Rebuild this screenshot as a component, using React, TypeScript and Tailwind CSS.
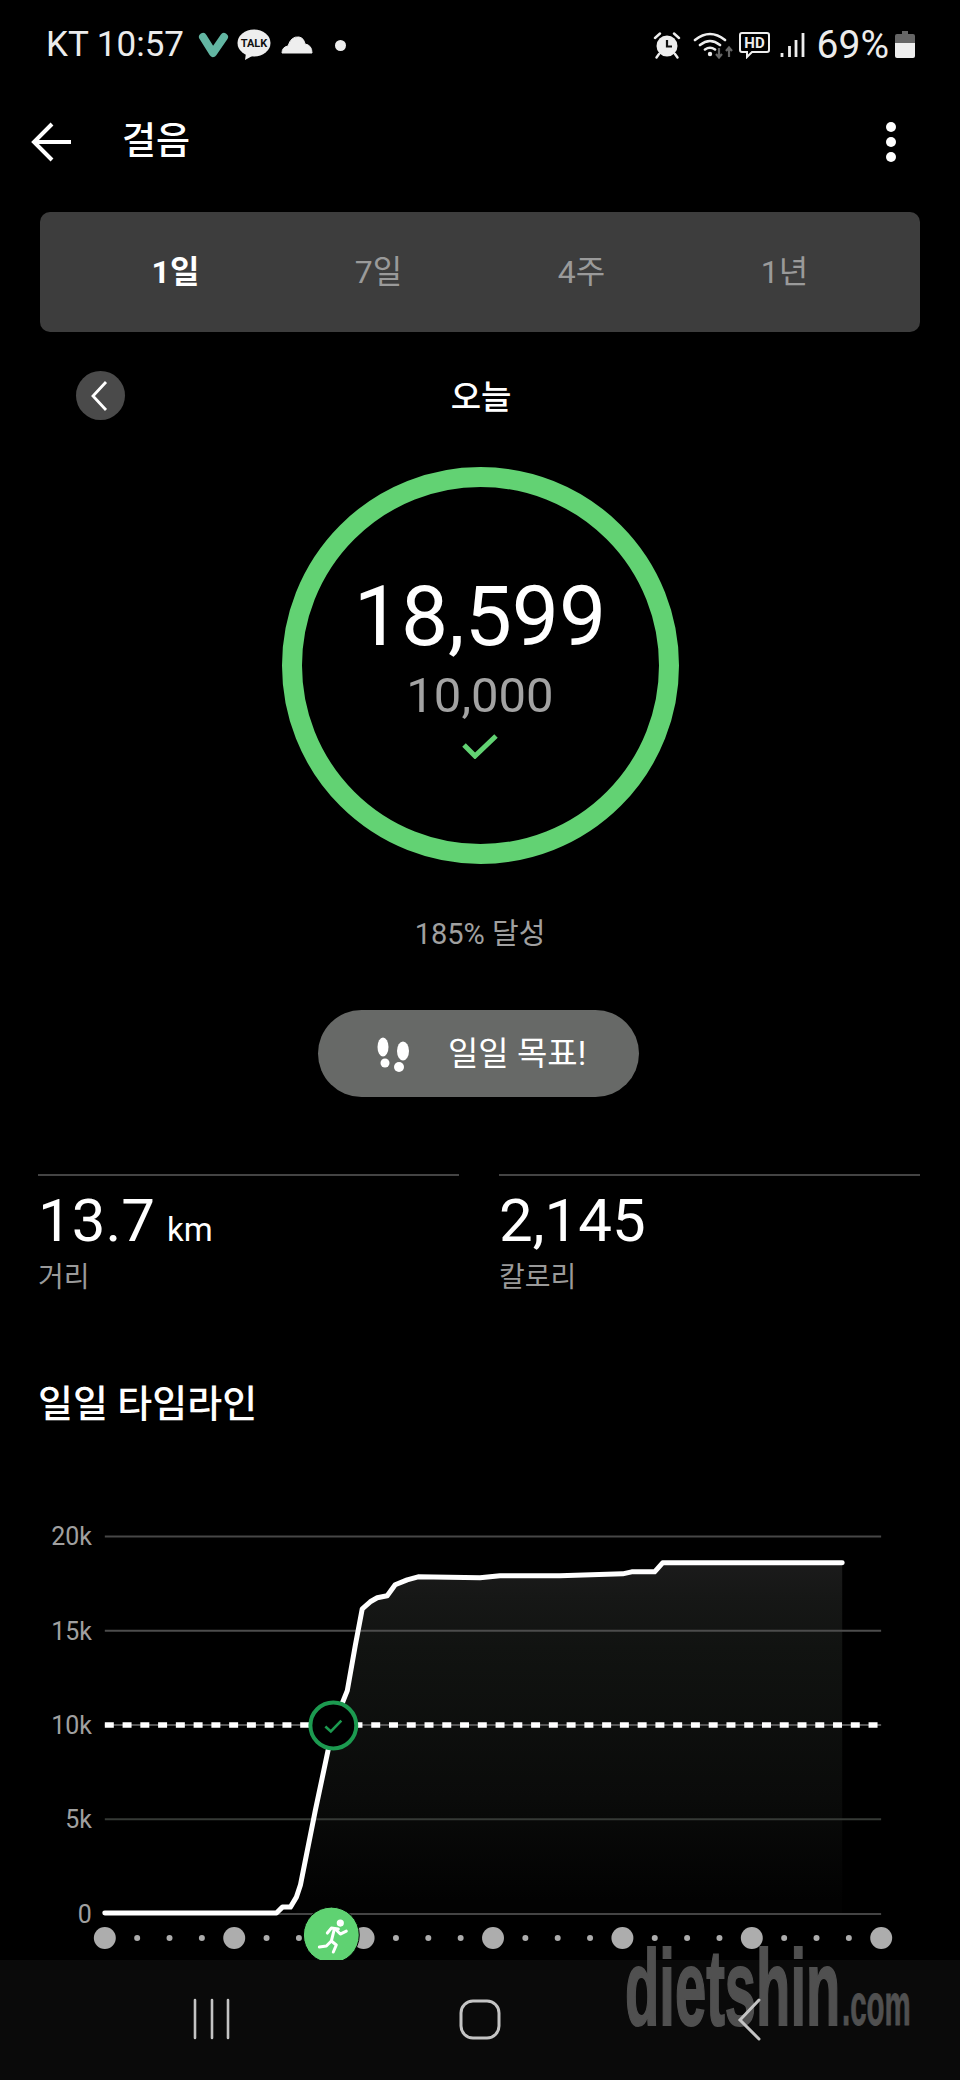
const tabs = ['1일', '7일', '4주', '1년'];
const gridLines = [
  { y: 1535.5, label: '20k', color: '#474747' },
  { y: 1630, label: '15k', color: '#4d4d4d' },
  { y: 1724.5, label: '10k', color: '#555555' },
  { y: 1819, label: '5k', color: '#363a36' },
  { y: 1914, label: '0', color: '#444444' },
];
const curve: [number, number][] = [
  [104, 1913], [276, 1913], [282, 1907], [290, 1907], [296, 1897], [300, 1885], [315, 1810], [333, 1725],
  [347, 1690], [355, 1645], [362, 1608], [370, 1601], [377, 1597], [387, 1595], [395, 1584], [407, 1579],
  [418, 1576], [480, 1577], [500, 1575], [560, 1575], [623, 1573], [632, 1571], [655, 1571], [663, 1562], [843, 1562],
];
const linePoints = curve.map((p) => p.join(',')).join(' ');
const areaPoints = curve.slice(4).map((p) => p.join(',')).join(' ') + ' 843,1914 296,1914';

function StatusBar() {
  return (
    <div className="h-[90px] flex items-center justify-between pl-[46px] pr-[45px] text-[#ececec] text-[35px]">
      <div className="flex items-center">
        <span>KT 10:57</span>
        <svg width="32" height="28" viewBox="0 0 32 28" className="ml-[14px]">
          <path d="M5 6 L15 22 L26 6" fill="none" stroke="#62b5a2" strokeWidth="8" strokeLinecap="round" strokeLinejoin="round" />
        </svg>
        <svg width="36" height="32" viewBox="0 0 36 32" className="ml-[6px]">
          <ellipse cx="18" cy="14" rx="16.5" ry="13.5" fill="#eeeeee" />
          <path d="M10 24 L9 31 L18 26 Z" fill="#eeeeee" />
          <text x="18" y="18" textAnchor="middle" fontSize="11" fontWeight="700" fill="#111111">TALK</text>
        </svg>
        <svg width="32" height="20" viewBox="0 0 32 20" className="ml-[9px]">
          <path d="M1 18 Q1 12 7 11 Q10 1 18 2 Q23 3 24 9 Q31 10 31 18 Z" fill="#eeeeee" stroke="#eeeeee" strokeLinejoin="round" />
        </svg>
        <div className="ml-[22px] w-[11px] h-[11px] rounded-full bg-[#eeeeee]" />
      </div>
      <div className="flex items-center">
        <svg width="28" height="28" viewBox="0 0 28 28">
          <circle cx="14" cy="15" r="10.5" fill="#eeeeee" />
          <path d="M14 9 V15.5 H19" fill="none" stroke="#111111" strokeWidth="2.2" />
          <path d="M2 7 L7 2.5 M26 7 L21 2.5 M6 23 L3.5 26.5 M22 23 L24.5 26.5" stroke="#eeeeee" strokeWidth="2.4" strokeLinecap="round" />
        </svg>
        <svg width="42" height="28" viewBox="0 0 42 28" className="ml-[12px]">
          <path d="M2 9 Q17 -3 32 9 M7 14 Q17 6 27 14 M12 18.5 Q17 15 22 18.5" fill="none" stroke="#eeeeee" strokeWidth="2.6" strokeLinecap="round" />
          <circle cx="17" cy="23" r="2.2" fill="#eeeeee" />
          <path d="M26 17 V26 M23 23 L26 26.5 L29 23 M36 26 V17 M33 20 L36 16.5 L39 20" fill="none" stroke="#666666" strokeWidth="2.2" />
        </svg>
        <svg width="31" height="28" viewBox="0 0 31 28" className="ml-[4px]">
          <path d="M3 2 H28 Q30 2 30 4 V19 Q30 21 28 21 H13 L8 26 V21 H3 Q1 21 1 19 V4 Q1 2 3 2 Z" fill="none" stroke="#eeeeee" strokeWidth="2" />
          <text x="15.5" y="17" textAnchor="middle" fontSize="15" fontWeight="700" fill="#eeeeee">HD</text>
        </svg>
        <svg width="25" height="26" viewBox="0 0 25 26" className="ml-[10px]">
          <path d="M2 25 V21 M9.5 25 V14 M16 25 V8 M23 25 V1" fill="none" stroke="#eeeeee" strokeWidth="2.8" />
        </svg>
        <span className="ml-[12px] text-[39px]">69%</span>
        <svg width="20" height="28" viewBox="0 0 20 28" className="ml-[6px]">
          <path d="M7 0 H13 V3 H7 Z" fill="#666666" />
          <path d="M0 5 Q0 3 2 3 H18 Q20 3 20 5 V12 H0 Z" fill="#666666" />
          <path d="M0 12 H20 V25 Q20 27 18 27 H2 Q0 27 0 25 Z" fill="#eeeeee" />
        </svg>
      </div>
    </div>
  );
}

function AppBar() {
  return (
    <div className="h-[104px] flex items-center pl-[31px] pr-[64px] text-white">
      <svg width="40" height="40" viewBox="0 0 40 40">
        <path d="M40 20 H3 M21 2 L3 20 L21 38" fill="none" stroke="#ffffff" strokeWidth="4" />
      </svg>
      <span className="ml-[51px] text-[37px] font-medium">걸음</span>
      <div className="ml-auto flex flex-col gap-[5px]">
        <div className="w-[10px] h-[10px] rounded-full bg-white" />
        <div className="w-[10px] h-[10px] rounded-full bg-white" />
        <div className="w-[10px] h-[10px] rounded-full bg-white" />
      </div>
    </div>
  );
}

function Chart() {
  return (
    <svg viewBox="0 1500 960 460" className="flex-1 w-full block">
      <defs>
        <linearGradient id="areaFade" x1="0" y1="1562" x2="0" y2="1900" gradientUnits="userSpaceOnUse">
          <stop offset="0" stopColor="#1b1b1b" />
          <stop offset="0.1" stopColor="#161716" />
          <stop offset="0.25" stopColor="#111311" />
          <stop offset="0.7" stopColor="#0a0b0a" />
          <stop offset="1" stopColor="#020202" />
        </linearGradient>
      </defs>
      <polygon points={areaPoints} fill="url(#areaFade)" />
      {gridLines.map((g) => (
        <g key={g.label}>
          <line x1="104" x2="882" y1={g.y} y2={g.y} stroke={g.color} strokeWidth="2" />
          <text x="91" y={g.y + 9} textAnchor="end" fontSize="25" fill="#a0a0a0">{g.label}</text>
        </g>
      ))}
      <line x1="104" x2="880" y1="1724.5" y2="1724.5" stroke="#ffffff" strokeWidth="5.5" strokeDasharray="9 8.8" />
      <polyline points={linePoints} fill="none" stroke="#ffffff" strokeWidth="5" strokeLinejoin="round" strokeLinecap="round" />
      <circle cx="333" cy="1725" r="23" fill="#000000" stroke="#1c9a50" strokeWidth="4" />
      <path d="M325 1726 L330.5 1731 L341 1720" fill="none" stroke="#1c9a50" strokeWidth="2.6" />
      {Array.from({ length: 25 }, (_, i) => {
        const big = i % 4 === 0;
        return <circle key={i} cx={104 + i * 32.42} cy="1938" r={big ? 11 : 3} fill="#adadad" />;
      })}
      <circle cx="331" cy="1935" r="28" fill="#5fd272" stroke="#000000" strokeWidth="1" />
      <g fill="none" stroke="#ffffff" strokeWidth="3" strokeLinecap="round" strokeLinejoin="round">
        <path d="M338 1929 L331 1928 L327 1933" />
        <path d="M334 1929 L331 1941 L336 1945 L333 1952" />
        <path d="M336 1930 L340 1934 L346 1931" />
        <path d="M331 1941 L326 1946 L319 1947" />
      </g>
      <circle cx="340" cy="1923" r="3.6" fill="#ffffff" />
    </svg>
  );
}

function NavBar() {
  return (
    <div className="relative h-[120px] bg-[#0a0a0a] flex-none">
      <div className="absolute left-[625px] top-[-26px] flex items-baseline font-['Liberation_Sans',sans-serif] font-bold text-[#505050] leading-none">
        <div className="w-[217px] text-[108px] whitespace-nowrap origin-left scale-x-[0.52] [-webkit-text-stroke:2px_#505050]">dietshin</div>
        <div className="w-[69px] text-[60px] whitespace-nowrap origin-left scale-x-[0.49] [-webkit-text-stroke:1px_#505050]">.com</div>
      </div>
      <svg viewBox="0 1960 960 120" className="relative w-full h-full block">
        <path d="M195 2000 V2038 M212 2000 V2038 M228 2000 V2038" fill="none" stroke="#c4c4c4" strokeWidth="2.6" strokeLinecap="round" />
        <rect x="461" y="2001" width="38" height="37" rx="12" fill="none" stroke="#c4c4c4" strokeWidth="3" />
        <path d="M759 2000 L740 2020 L759 2039" fill="none" stroke="#c4c4c4" strokeWidth="3" strokeLinecap="round" />
      </svg>
    </div>
  );
}

export default function App() {
  return (
    <div className="w-[960px] h-[2080px] bg-black overflow-hidden flex flex-col font-['Roboto','Noto_Sans_CJK_KR',sans-serif]">
      <StatusBar />
      <AppBar />

      <div className="mt-[18px] mx-[40px] h-[120px] flex-none rounded-[10px] bg-[#3d3d3d] px-[34px] grid grid-cols-4 items-center text-center text-[32px] text-[#9a9a9a]">
        {tabs.map((t, i) => (
          <span key={t} className={i === 0 ? 'text-white font-bold' : ''}>{t}</span>
        ))}
      </div>

      <div className="mt-[39px] mx-[76px] h-[50px] flex-none relative flex items-center justify-center text-white text-[33px] font-medium">
        <div className="absolute left-0 top-0 w-[49px] h-[49px] rounded-full bg-[#4a4a4a] flex items-center justify-center">
          <svg width="18" height="30" viewBox="0 0 18 30" className="mr-[3px]">
            <path d="M16 1 L3 15 L16 29" fill="none" stroke="#ffffff" strokeWidth="2.8" />
          </svg>
        </div>
        <span className="mr-[-2px] mt-[3px]">오늘</span>
      </div>

      <div className="mt-[46px] mx-auto w-[397px] h-[397px] flex-none rounded-full border-[20px] border-[#62d273] flex flex-col items-center">
        <div className="mt-[80px] h-[100px] leading-[100px] text-[84px] text-white">18,599</div>
        <div className="mt-[1px] h-[56px] leading-[56px] text-[49px] text-[#a3a3a3]">10,000</div>
        <svg width="36" height="26" viewBox="0 0 36 26" className="mt-[9px]">
          <path d="M2 12 L13 23 L34 3" fill="none" stroke="#62d273" strokeWidth="5" />
        </svg>
      </div>

      <div className="mt-[50px] h-[40px] leading-[40px] flex-none text-center text-[29px] text-[#a0a0a0]">185% 달성</div>

      <div className="mt-[56px] ml-[318px] w-[321px] h-[87px] flex-none rounded-full bg-[#676967] flex items-center text-[33px] text-white">
        <svg width="38" height="38" viewBox="0 0 38 38" className="ml-[55px]">
          <ellipse cx="10" cy="12" rx="5.5" ry="9.5" fill="#ffffff" />
          <circle cx="12" cy="28" r="4.5" fill="#ffffff" />
          <ellipse cx="30" cy="16" rx="6" ry="9.5" fill="#ffffff" />
          <circle cx="26" cy="32" r="5" fill="#ffffff" />
        </svg>
        <span className="ml-[37px]">일일 목표!</span>
      </div>

      <div className="mt-[77px] ml-[38px] mr-[40px] flex-none grid grid-cols-2 gap-[40px]">
        {[
          { value: '13.7', unit: 'km', label: '거리' },
          { value: '2,145', unit: '', label: '칼로리' },
        ].map((s) => (
          <div key={s.label} className="border-t-2 border-[#444444]">
            <div className="mt-[15px] h-[60px] leading-[60px] text-white text-[60px]">
              {s.value}
              {s.unit && <span className="ml-[12px] text-[33px]">{s.unit}</span>}
            </div>
            <div className="mt-[7px] h-[40px] leading-[40px] text-[28px] text-[#9a9a9a]">{s.label}</div>
          </div>
        ))}
      </div>

      <div className="mt-[81px] ml-[38px] h-[50px] leading-[50px] flex-none text-[38px] font-medium text-white">일일 타임라인</div>

      <div className="mt-[72px] flex-1 min-h-0 flex">
        <Chart />
      </div>
      <NavBar />
    </div>
  );
}
